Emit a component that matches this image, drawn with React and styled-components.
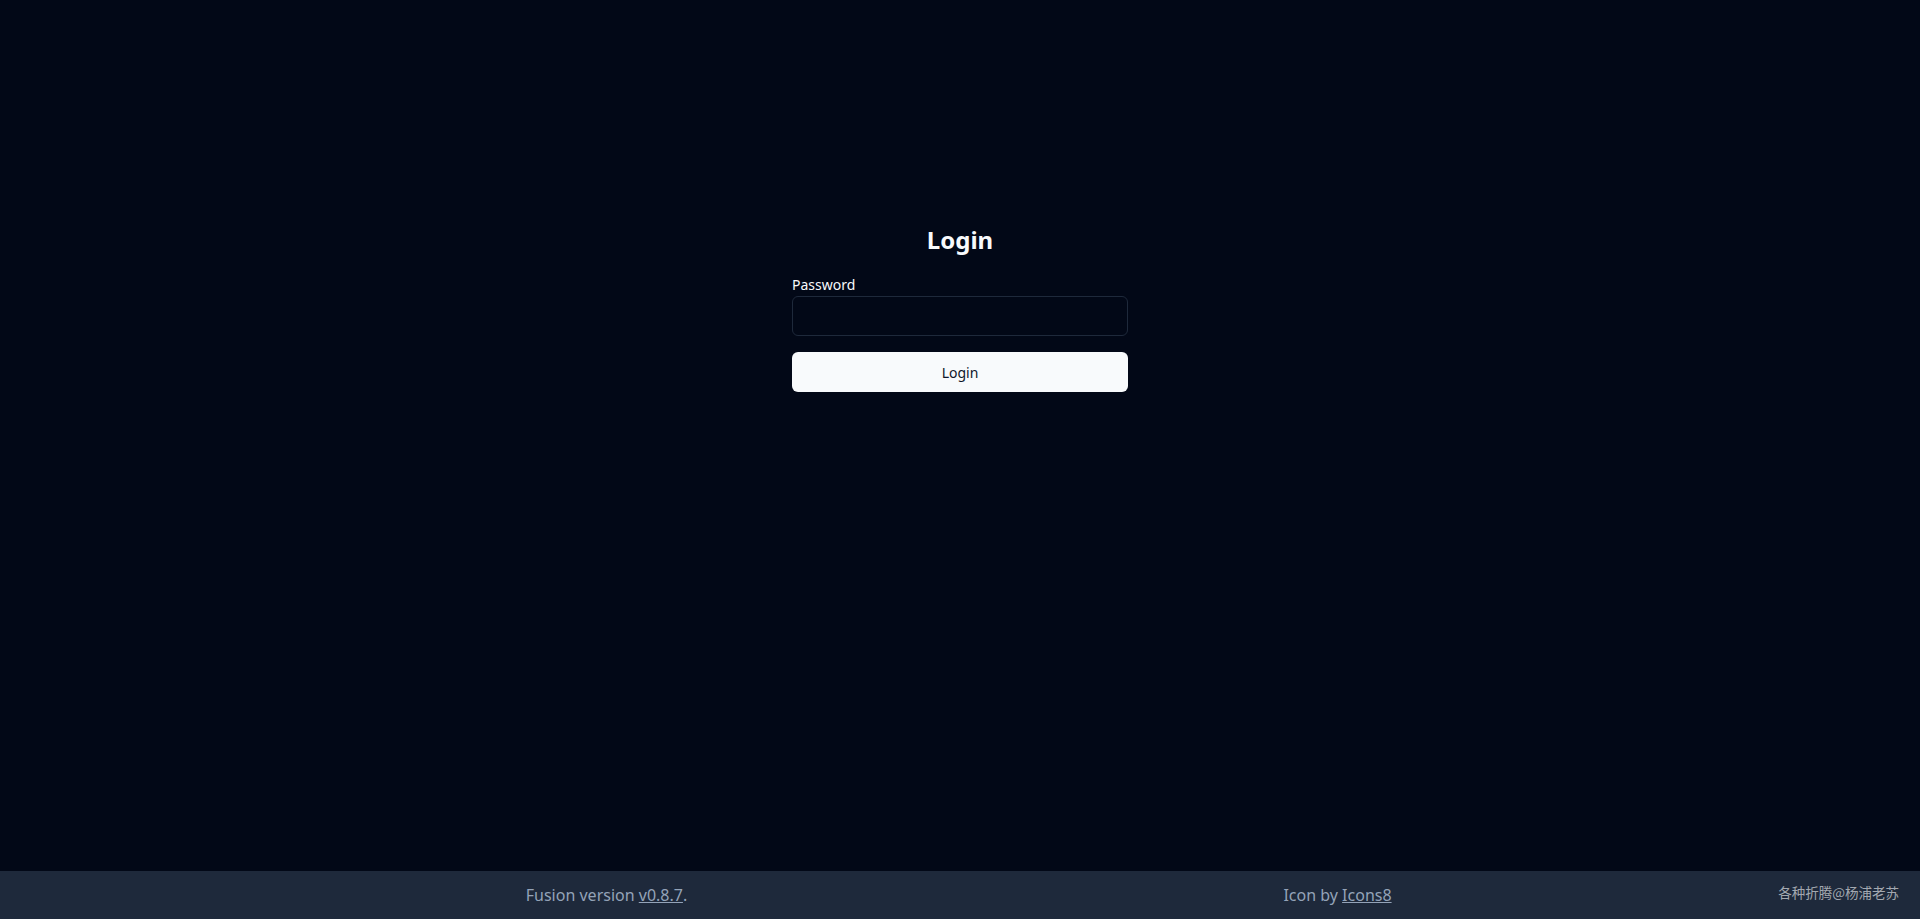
import React from "react";
import styled, { createGlobalStyle } from "styled-components";

const GlobalStyle = createGlobalStyle`
  html, body {
    margin: 0;
    padding: 0;
    background: #020817;
    color: #f8fafc;
    font-family: "Noto Sans", "Open Sans", "Liberation Sans", sans-serif;
  }
  * { box-sizing: border-box; }
`;

const Page = styled.div`
  display: flex;
  flex-direction: column;
  min-height: 100vh;
  background: #020817;
`;

const Main = styled.main`
  flex: 1;
  display: flex;
  justify-content: center;
  padding-top: 224px;
`;

const Form = styled.form`
  width: 336px;
  display: flex;
  flex-direction: column;
`;

const Title = styled.h1`
  margin: 0 0 19px;
  font-size: 24px;
  line-height: 32px;
  font-weight: 700;
  text-align: center;
  color: #f8fafc;
`;

const Label = styled.label`
  font-size: 14px;
  line-height: 20px;
  color: #f8fafc;
  margin-bottom: 1px;
`;

const Input = styled.input`
  height: 40px;
  width: 100%;
  border: 1px solid #1e293b;
  border-radius: 6px;
  background: transparent;
  color: #f8fafc;
  padding: 8px 12px;
  font-size: 14px;
  font-family: inherit;
  outline: none;
`;

const Button = styled.button`
  margin-top: 16px;
  height: 40px;
  width: 100%;
  border: none;
  border-radius: 6px;
  background: #f8fafc;
  color: #0f172a;
  font-size: 14px;
  font-family: inherit;
  cursor: pointer;
`;

const Footer = styled.footer`
  height: 48px;
  background: #1e293b;
  display: grid;
  grid-template-columns: 731px 731px 1fr;
  align-items: center;
  padding: 0 21px 0 241px;
  color: #94a3b8;
  font-size: 16px;
`;

const FooterItem = styled.div`
  text-align: center;
`;

const Link = styled.a`
  color: #94a3b8;
  text-decoration: underline;
`;

const Watermark = styled.div`
  justify-self: end;
  font-size: 13.5px;
  color: #a3a8b0;
  margin-top: -7px;
  font-family: "Noto Sans CJK SC", "Noto Sans", sans-serif;
`;

export default function App() {
  return (
    <Page>
      <GlobalStyle />
      <Main>
        <Form onSubmit={(e) => e.preventDefault()}>
          <Title>Login</Title>
          <Label htmlFor="password">Password</Label>
          <Input id="password" type="password" />
          <Button type="submit">Login</Button>
        </Form>
      </Main>
      <Footer>
        <FooterItem>
          Fusion version <Link href="#">v0.8.7</Link>.
        </FooterItem>
        <FooterItem>
          Icon by <Link href="#">Icons8</Link>
        </FooterItem>
        <Watermark>各种折腾@杨浦老苏</Watermark>
      </Footer>
    </Page>
  );
}
